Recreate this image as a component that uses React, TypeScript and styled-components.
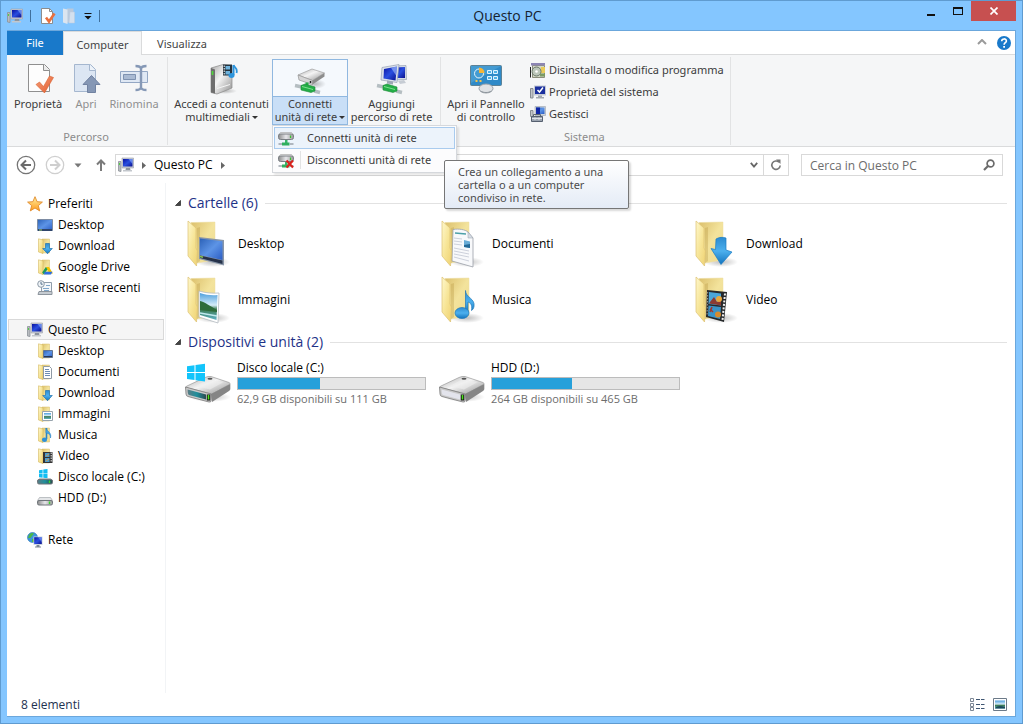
import React from "react";
import styled, { createGlobalStyle, css } from "styled-components";

const GlobalStyle = createGlobalStyle`
  *, *::before, *::after { box-sizing: border-box; }
  body {
    margin: 0;
    font-family: "Open Sans", "Noto Sans", "Liberation Sans", sans-serif;
    font-size: 12px;
    line-height: 16px;
    color: #000;
  }
  button, input { font: inherit; color: inherit; }
  button { border: 0; padding: 0; margin: 0; background: none; }
  ul { list-style: none; margin: 0; padding: 0; }
  a { color: inherit; text-decoration: none; }
  svg { display: block; flex: none; }
`;

/* ---------- shared paint ---------- */

const PaintSheet = styled.svg`
  position: absolute;
`;

const Paints = () => (
  <PaintSheet width="0" height="0" aria-hidden="true">
    <defs>
      <linearGradient id="flap" x1="0" y1="0" x2="1" y2="1">
        <stop offset="0" stopColor="#fef7cc" />
        <stop offset="0.5" stopColor="#f7e597" />
        <stop offset="1" stopColor="#efd272" />
      </linearGradient>
      <linearGradient id="back" x1="0" y1="0" x2="1" y2="1">
        <stop offset="0" stopColor="#dcc06c" />
        <stop offset="0.5" stopColor="#f3e39c" />
        <stop offset="1" stopColor="#eedb90" />
      </linearGradient>
      <linearGradient id="screen" x1="0" y1="0" x2="1" y2="1">
        <stop offset="0" stopColor="#2c62b8" />
        <stop offset="0.5" stopColor="#5d94e6" />
        <stop offset="1" stopColor="#2a5cc4" />
      </linearGradient>
      <linearGradient id="navy" x1="0" y1="0" x2="1" y2="1">
        <stop offset="0" stopColor="#0a12a0" />
        <stop offset="0.5" stopColor="#2a4fe0" />
        <stop offset="1" stopColor="#0a0f8c" />
      </linearGradient>
      <linearGradient id="blue" x1="0" y1="0" x2="0" y2="1">
        <stop offset="0" stopColor="#2d8bd0" />
        <stop offset="0.5" stopColor="#4cb0ee" />
        <stop offset="1" stopColor="#1273be" />
      </linearGradient>
      <linearGradient id="metal" x1="0" y1="0" x2="1" y2="1">
        <stop offset="0" stopColor="#a9a9a9" />
        <stop offset="0.45" stopColor="#f4f4f4" />
        <stop offset="1" stopColor="#8f8f8f" />
      </linearGradient>
      <linearGradient id="metalFront" x1="0" y1="0" x2="1" y2="0">
        <stop offset="0" stopColor="#8c8c8c" />
        <stop offset="0.5" stopColor="#e6e6ea" />
        <stop offset="1" stopColor="#9a9a9a" />
      </linearGradient>
      <linearGradient id="teal" x1="0" y1="0" x2="1" y2="0">
        <stop offset="0" stopColor="#5c7c84" />
        <stop offset="0.5" stopColor="#1f8f9c" />
        <stop offset="1" stopColor="#2b4a50" />
      </linearGradient>
      <linearGradient id="sky" x1="0" y1="0" x2="0" y2="1">
        <stop offset="0" stopColor="#4d9fdd" />
        <stop offset="0.45" stopColor="#d5ecf8" />
        <stop offset="0.6" stopColor="#3c7a52" />
        <stop offset="1" stopColor="#5fb3c8" />
      </linearGradient>
      <linearGradient id="star" x1="0" y1="0" x2="0" y2="1">
        <stop offset="0" stopColor="#fff0a0" />
        <stop offset="1" stopColor="#ff9a1c" />
      </linearGradient>
      <linearGradient id="tick" x1="0" y1="0" x2="1" y2="1">
        <stop offset="0" stopColor="#f6a27c" />
        <stop offset="1" stopColor="#e2592c" />
      </linearGradient>
      <radialGradient id="shade">
        <stop offset="0" stopColor="#000" stopOpacity="0.25" />
        <stop offset="1" stopColor="#000" stopOpacity="0" />
      </radialGradient>
    </defs>
  </PaintSheet>
);

type IconProps = { size: number; box?: number; children: React.ReactNode };
const Icon = ({ size, box = size, children }: IconProps) => (
  <svg width={size} height={size} viewBox={`0 0 ${box} ${box}`} aria-hidden="true">
    {children}
  </svg>
);

/* ---------- small icons, 16 px ---------- */

const PcIcon = () => (
  <Icon size={16}>
    <path d="M0.500 4.500h2.500v10l-2.500-0.500z" fill="#b9bcc0" stroke="#8c9298" strokeWidth="0.800" />
    <path d="M1.500 6v2" stroke="#53d044" />
    <path d="M4 1h11.500v10H4z" fill="#c9ced6" stroke="#9aa0aa" strokeWidth="0.600" />
    <path d="M5 2h9.500v7.500H5z" fill="url(#navy)" />
    <path d="M10.500 2h4v5z" fill="#8fb0f8" opacity="0.6" />
    <path d="M8 11h4l0.500 2h-5z" fill="#8e959e" />
    <path d="M5 13h9v1.500H5z" fill="#c3c7cc" />
  </Icon>
);

const StarIcon = () => (
  <Icon size={16}>
    <path
      d="M8 0.700l2.100 5 5.300 0.400-4.100 3.500 1.400 5.300L8 12l-4.700 2.900 1.400-5.300L0.600 6.100l5.300-0.400z"
      fill="url(#star)"
      stroke="#e08a2a"
      strokeWidth="0.900"
      strokeLinejoin="round"
    />
  </Icon>
);

const MonitorIcon = () => (
  <Icon size={16}>
    <path d="M0.500 2.500h15v11h-15z" fill="url(#screen)" stroke="#7d8ca3" />
    <path d="M1 12h14v2H1z" fill="#2f456b" />
    <path d="M2 13h3" stroke="#9fd07a" />
  </Icon>
);

const SmallFolderBase = () => (
  <>
    <path d="M5 1h7.500v14H5z" fill="url(#back)" stroke="#d9be6c" strokeWidth="0.500" />
    <path d="M1.500 0.800L6 2v13.500L1.500 14z" fill="url(#flap)" stroke="#d5b860" strokeWidth="0.600" />
  </>
);

type Kind = "desktop" | "documenti" | "download" | "immagini" | "musica" | "video" | "drive";

const smallOverlay: Record<Kind, React.ReactNode> = {
  desktop: (
    <>
      <path d="M6.500 7.500h9v7h-9z" fill="url(#screen)" stroke="#62748f" />
      <path d="M7 13.500h8" stroke="#263754" />
    </>
  ),
  documenti: (
    <>
      <path d="M6.500 2.500h6l2 2v10h-8z" fill="#fff" stroke="#8f9aa5" />
      <path d="M8 5.500h4M8 7.500h5M8 9.500h5M8 11.500h5" stroke="#6d8db5" />
    </>
  ),
  download: (
    <path d="M8.500 5.500h4v5h2.800L10.500 15.700 5.700 10.500h2.800z" fill="url(#blue)" stroke="#2372ad" strokeWidth="0.700" />
  ),
  immagini: (
    <>
      <path d="M5.500 5.500h10v9h-10z" fill="#fff" stroke="#98a4ad" />
      <path d="M7 7h7v6H7z" fill="url(#sky)" />
    </>
  ),
  musica: (
    <>
      <path d="M9.500 1v11" stroke="#2b83c4" strokeWidth="1.600" />
      <path d="M9 1c1 4 6 4 4.500 10 0-4-2-4.500-4.500-5z" fill="#46a5e4" stroke="#2b83c4" strokeWidth="0.600" />
      <ellipse cx="7.500" cy="12.800" rx="2.600" ry="2.200" fill="#2f90d6" />
    </>
  ),
  video: (
    <>
      <path d="M6 4h9.500v11H6z" fill="#343434" />
      <path d="M8 5h4.500v4H8zM8 10h4.500v4H8z" fill="#4d9bcb" />
      <path d="M9 8l3-2M9 13l3-2" stroke="#d09a4a" />
      <path d="M14.200 4.500v10" stroke="#eee" strokeDasharray="1.500 1" />
    </>
  ),
  drive: (
    <>
      <path d="M8.800 8h3.200l4 6.500h-3.400z" fill="#f5c400" />
      <path d="M8.800 8l-3.600 5.500 1.700 2 3.600-5.300z" fill="#1d9b55" />
      <path d="M7.800 12.800H15.500L14 15.500H6.900z" fill="#2f6fe0" />
    </>
  ),
};

const SmallFolder = ({ kind }: { kind: Kind }) => (
  <Icon size={16}>
    <SmallFolderBase />
    {smallOverlay[kind]}
  </Icon>
);

const RecentIcon = () => (
  <Icon size={16}>
    <path d="M4.500 2.500h10v9h-10z" fill="#f4f7fa" stroke="#8f9dab" />
    <path d="M9 5.500h4M6 8.500h6M7 10.500h5" stroke="#7fa6c9" />
    <path d="M2 11.500h13v3H1z" fill="#c6ccd2" stroke="#8d959d" />
    <circle cx="4" cy="4" r="3.300" fill="#eef3f7" stroke="#8d9aa6" />
    <path d="M4 2v2.200h1.700" stroke="#57708a" fill="none" />
  </Icon>
);

const WinLogo = () => (
  <path d="M2 1.200l3.600-0.500v3.700H2zM6.300 0.600L10.500 0v4.400H6.300zM2 5.100h3.600v3.600L2 8.300zM6.300 5.100h4.200v4.200l-4.200-0.500z" fill="#13bdf2" />
);

const SmallDrive = ({ system }: { system?: boolean }) => (
  <Icon size={16}>
    {system && <WinLogo />}
    <path
      d={system ? "M2.500 9.500h11l2 2.500H0.500z" : "M2.500 7.500h11l2 3H0.500z"}
      fill="#e4e6e8"
      stroke="#9a9fa4"
      strokeWidth="0.600"
    />
    <rect x="0.500" y="10.500" width="15" height="4.500" rx="1.500" fill={system ? "url(#teal)" : "url(#metalFront)"} stroke="#70767b" />
    <path d="M12.500 11.500v2.500" stroke="#37d62e" strokeWidth="1.400" />
  </Icon>
);

const NetworkIcon = () => (
  <Icon size={16}>
    <circle cx="5.500" cy="5.500" r="5" fill="#3c96dc" stroke="#2771b5" strokeWidth="0.600" />
    <path d="M2 3c2-2.500 4-2 5-1.500L5 4 3.500 6 1 6zM5 7l3 0-1 3-2 0z" fill="#4db848" />
    <path d="M6.500 4.500h9v8.500h-9z" fill="#ccd4de" />
    <path d="M7.200 5.200h7.600v6.800H7.200z" fill="url(#navy)" />
    <path d="M11 5.200h3.800v5z" fill="#8fb0f8" opacity="0.500" />
    <path d="M9.500 13h3v1.500h1.500v1H8v-1h1.500z" fill="#7c8794" />
  </Icon>
);

const NetDriveIcon = ({ removed }: { removed?: boolean }) => (
  <Icon size={16}>
    <path d="M2.500 1.500h11l2 2.500H0.500z" fill="#efefef" stroke="#a0a0a0" strokeWidth="0.600" />
    <rect x="0.500" y="3" width="15" height="5.500" rx="2" fill="url(#metalFront)" stroke="#7a7f84" />
    <path d="M12.500 4.500v2.500" stroke="#37c62e" strokeWidth="1.200" />
    <path d="M7 9h2.500v3H7z" fill="#39b56a" />
    <path d="M4 11.500h7.500v3H4z" fill="#2faf5e" />
    <path d="M0.500 13h3.500M12 13h3.500" stroke="#9aa3aa" strokeWidth="1.600" />
    {removed && <path d="M8.500 7.500l6.500 7M15 7.500l-6.500 7" stroke="#d8231c" strokeWidth="2.200" />}
  </Icon>
);

const UninstallIcon = () => (
  <Icon size={16}>
    <path d="M2.500 3.500h12v12h-12z" fill="#d4d8c6" stroke="#8b8d7c" />
    <path d="M1 1h14v2.500H1z" fill="#8d86b4" />
    <path d="M11 5h4v6h-4z" fill="#e9cb5a" />
    <circle cx="6.500" cy="9.500" r="4.500" fill="#bcc6ba" stroke="#6a786a" />
    <circle cx="6.500" cy="9.500" r="1.300" fill="#fff" />
    <path d="M0.500 5v10.500" stroke="#222" />
    <path d="M10 13h5" stroke="#7b9a62" strokeWidth="3" />
  </Icon>
);

const SystemIcon = () => (
  <Icon size={16}>
    <path d="M0.500 4.500h2.500v9.500h-2.500z" fill="#c3c6ca" stroke="#868c93" />
    <path d="M4 1.500h12v10H4z" fill="#c5cbd4" />
    <path d="M5 2.500h10v7.500H5z" fill="#1a2f9e" />
    <path d="M7.500 6l2 2 3.500-4.500" stroke="#fff" strokeWidth="1.500" fill="none" />
    <path d="M8 11.500h4v1.500h2v1.500H6V13h2z" fill="#a3a9b0" />
  </Icon>
);

const ManageIcon = () => (
  <Icon size={16}>
    <path d="M5 0.500h10.500v9H5z" fill="#cfd5dd" stroke="#9aa2ad" strokeWidth="0.600" />
    <path d="M6 1.500h8.500v6.500H6z" fill="url(#screen)" />
    <path d="M6 1.500h4v6.500H6z" fill="#1027a6" />
    <path d="M0.500 4.500h2.500v6h-2.500z" fill="#c3c6ca" stroke="#868c93" />
    <path d="M3.500 10V8.500h7V10" stroke="#5d6570" fill="none" />
    <path d="M1.500 10.500h11v5h-11z" fill="#9ba4b0" stroke="#566070" />
    <path d="M2 12.500h10M5 11.500v2.500M9 11.500v2.500" stroke="#dfe3e8" />
  </Icon>
);

const PageTickIcon = () => (
  <Icon size={16}>
    <path d="M1.500 0.500h8l3 3v12h-11z" fill="#fff" stroke="#8c8c8c" />
    <path d="M9.500 0.500v3h3" fill="none" stroke="#8c8c8c" />
    <path d="M6 9.500l3 4 5.500-8" stroke="#e8703f" strokeWidth="2.600" fill="none" />
  </Icon>
);

const NewFolderIcon = () => (
  <Icon size={16}>
    <path d="M5 0.500h6.500v14H5z" fill="#b9c9dc" />
    <path d="M1 0.500l4.500 1V16L1 14.500z" fill="#dbe5f0" />
    <path d="M8 4h4.500v11H7z" fill="#d3e0ee" stroke="#bccbdd" strokeWidth="0.500" />
  </Icon>
);

const DetailsViewIcon = () => (
  <Icon size={16}>
    <path d="M1.500 1.500h3v3h-3zM1.500 6.500h3v3h-3zM1.500 10.500h3v3h-3z" fill="#fff" stroke="#7d8795" />
    <path d="M7 2.500h4M12 2.500h3.500M7 7.500h4M12 7.500h3.500M7 11.500h4M12 11.500h3.500" stroke="#3f5672" />
  </Icon>
);

const TilesViewIcon = () => (
  <Icon size={16}>
    <path d="M1.500 1.500h13v12h-13z" fill="#fff" stroke="#6c7a88" />
    <path d="M3 3.500h10v8H3z" fill="url(#sky)" />
    <path d="M3 11.500c2-3 5-3 10-1.500v1.500z" fill="#1c4a5a" />
  </Icon>
);

/* ---------- ribbon icons, 32 px ---------- */

const PropertiesLarge = () => (
  <Icon size={32}>
    <path d="M6.500 1.500h16l5 5v22h-21z" fill="#fdfdfd" stroke="#8f8f8f" />
    <path d="M21.500 1.500v6h6" fill="#e9e9e9" stroke="#8f8f8f" />
    <path d="M14 21.500l3.500-2.500 4 4.500 6-10.500 4 1.500-9 15.500z" fill="url(#tick)" stroke="#d9622f" strokeWidth="0.600" />
  </Icon>
);

const OpenLarge = () => (
  <Icon size={32}>
    <path d="M4.500 1.500h16l5 5v22h-21z" fill="#dce6f3" stroke="#a5b7cf" />
    <path d="M19.500 1.500v6h6" fill="#eef3f9" stroke="#a5b7cf" />
    <path d="M21.500 12.500l8.500 9h-4.500v8h-8v-8H13z" fill="#8597b5" stroke="#7182a1" />
  </Icon>
);

const RenameLarge = () => (
  <Icon size={32}>
    <path d="M2.500 8.500h27v11h-27z" fill="#dfe8f4" stroke="#93a7c4" />
    <path d="M5.500 11.500h12v5h-12z" fill="#a9bad3" stroke="#7e92b1" />
    <path d="M17.500 3c3 0 5 0.500 5.500 2.500 0.500-2 2.500-2.500 5.500-2.500M23 5v20M17.500 27c3 0 5-0.500 5.500-2.500 0.500 2 2.500 2.500 5.500 2.500" stroke="#8598b6" strokeWidth="2.400" fill="none" />
  </Icon>
);

const MediaLarge = () => (
  <Icon size={32}>
    <ellipse cx="19" cy="28" rx="12" ry="3" fill="url(#shade)" />
    <path d="M5 5l12-3.500 9 1.500v22L11 31l-6-1.500z" fill="url(#metal)" stroke="#8a8a8a" strokeWidth="0.700" />
    <path d="M5 5l4 1.500V30.500L5 29.500z" fill="#6e6e6e" />
    <path d="M6.500 8v4" stroke="#4ed83a" strokeWidth="1.600" />
    <path d="M11 25.500l13-4" stroke="#f5f5f5" />
    <path d="M17 1.500h9v11h-9z" fill="#26333d" />
    <path d="M19.500 3h4.500v3.500h-4.500zM19.500 8h4.500v3.500h-4.500z" fill="#6fb3dc" />
    <path d="M18.200 2.500v9" stroke="#fff" strokeDasharray="1.500 1" />
    <path d="M27.500 2v10" stroke="#2c94dc" strokeWidth="2" />
    <path d="M27.500 2c1 3 4.500 3 3 8" fill="none" stroke="#2c94dc" strokeWidth="1.800" />
    <ellipse cx="25.500" cy="12.500" rx="3" ry="2.400" fill="#2c94dc" />
  </Icon>
);

const GreenCable = () => (
  <>
    <path d="M1 22.500l7 1.500M20 28l6 1.500" stroke="#b5bec2" strokeWidth="3.400" />
    <path d="M7 22.500l4-1.500 10 3v4l-4 1.500L7 27z" fill="#23ae47" stroke="#1c8a38" strokeWidth="0.600" />
    <path d="M8 23.500l11 3" stroke="#7fe08f" />
  </>
);

const MapDriveLarge = () => (
  <Icon size={32}>
    <ellipse cx="21" cy="21" rx="11" ry="5" fill="url(#shade)" />
    <path d="M4 12L18 6l12.500 4-12 7.500z" fill="url(#metal)" stroke="#a0a0a0" strokeWidth="0.700" />
    <path d="M4 12l14.500 5.500v4L5 17z" fill="#d5d5d5" stroke="#959595" strokeWidth="0.700" />
    <path d="M18.500 17.500L30.500 10v3.500l-12 8z" fill="#8d8d8d" />
    <path d="M16.500 18v2" stroke="#222" strokeWidth="1.500" />
    <path d="M13 19.500v4" stroke="#23ae47" strokeWidth="3" />
    <GreenCable />
  </Icon>
);

const AddPlaceLarge = () => (
  <Icon size={32}>
    <path d="M17 3l13-0.500 0.500 14L18 17z" fill="#d4dbe6" stroke="#96a1b3" strokeWidth="0.700" />
    <path d="M19 4.500l10-0.500v11L19 15z" fill="url(#navy)" />
    <path d="M6 4.500l17-3-2 18-16-2.500z" fill="#dbe1ea" stroke="#96a1b3" strokeWidth="0.700" />
    <path d="M8 6l13-2.500-1.500 14-12-2z" fill="url(#navy)" />
    <path d="M15 4.700l6-1.200-1 9z" fill="#a9c1fb" opacity="0.600" />
    <path d="M11 17.500l6 1v3l-6-1z" fill="#9ea8b5" />
    <path d="M22 18l6-1 2 3-6 1z" fill="#c6ccd4" />
    <GreenCable />
  </Icon>
);

const ControlPanelLarge = () => (
  <Icon size={32}>
    <rect x="0.500" y="2.500" width="31" height="20" rx="1" fill="#2f8ac8" stroke="#5d8296" />
    <path d="M1 3h30L1 20z" fill="#65b4e2" opacity="0.400" />
    <circle cx="9" cy="10.500" r="4.500" fill="none" stroke="#e9f5fc" />
    <path d="M9 10V4.500a5.500 5.500 0 0 1 5.500 5.500z" fill="#f7b536" />
    <path d="M17.500 7.500h4v3h-4zM23.500 7.500h4v3h-4zM17.500 13.500h4v3h-4zM23.500 13.500h4v3h-4z" fill="#4fb2e6" stroke="#dff3ff" />
    <path d="M5.500 18h2M9.500 18h2" stroke="#f7c44a" strokeWidth="2" />
    <ellipse cx="16" cy="25.500" rx="7" ry="4.500" fill="#dfe2e5" stroke="#9aa1a8" />
    <path d="M10.500 28c3 2 8 2 11 0" stroke="#8d959c" fill="none" />
  </Icon>
);

/* ---------- content icons, 48 px ---------- */

const folderContents: Partial<Record<Kind, React.ReactNode>> = {
  desktop: (
    <>
      <path d="M16 17l25 3v25.500L16 39z" fill="#8996a8" />
      <path d="M17 18.500l22.500 2.700V40L17 35z" fill="url(#screen)" />
      <path d="M17 35.500l22.500 5v3.500L17 38z" fill="#26324a" />
      <path d="M17 36.500l3 0.700" stroke="#88c24f" strokeWidth="1.500" />
    </>
  ),
  documenti: (
    <>
      <path d="M16 9.500c6-1 12 0 15 2.500l5 6v29L15 41z" fill="#f8f9fb" stroke="#9aa0a8" strokeWidth="0.800" />
      <path d="M31 12v6h5z" fill="#d6dde6" stroke="#9aa0a8" strokeWidth="0.500" />
      <path d="M18 13l11 1" stroke="#4da0a8" strokeWidth="1.300" />
      <path d="M17 18l8 1M17 21l8 1M17 24l8 1M17 28l15 3M17 31l15 3M17 34l15 3M17 37l15 4" stroke="#cdd1db" />
      <path d="M27 20l6 1.500v6.500L27 27z" fill="#69acd6" />
      <path d="M27 25l6-1v4L27 27z" fill="#256a97" />
    </>
  ),
  download: (
    <path d="M25 19c3-2 7-2 10-1v12l6 2-11 12.500L20 28.500l4.500 1z" fill="url(#blue)" stroke="#1b7cc4" strokeWidth="0.700" />
  ),
  immagini: (
    <>
      <path d="M16 15c7 2 13 2.500 20 2l-1 30-19-6z" fill="#fff" stroke="#b3bac0" strokeWidth="0.800" />
      <path d="M17 17c6 2 12 2.500 17.500 2l-1 25L17 39z" fill="url(#sky)" />
      <path d="M17 25c5 1 10 5 17 9v2l-17-2z" fill="#2d6b3a" />
      <path d="M17 37l17 3" stroke="#bfe9ee" strokeWidth="1.500" />
    </>
  ),
  musica: (
    <>
      <path d="M28.500 14.500c0 7 10 8 8.500 16-0.500 2-1 3-2.500 4 1-6-1.500-8-3.500-8.500V37h-2.500z" fill="url(#blue)" stroke="#1f78b8" strokeWidth="0.700" />
      <ellipse cx="25" cy="37" rx="7" ry="5.500" fill="url(#blue)" stroke="#1f78b8" strokeWidth="0.700" />
    </>
  ),
  video: (
    <>
      <path d="M16 14l20 2-3 30-18-5z" fill="#26292b" />
      <path d="M18 16l12 1.500v12L17.500 28z" fill="#4aa7d9" />
      <path d="M17.500 29.500L30 31l-1 12-12-3z" fill="#3a93c8" />
      <path d="M19 26l4-5 3 5 4-3v6.500L18 27.500z" fill="#8c3b32" />
      <circle cx="28" cy="23" r="3" fill="#e9a93c" />
      <circle cx="27" cy="38.500" r="3" fill="#d88b2c" />
      <path d="M19 33l3 3M21 31l-2 5" stroke="#a3382a" strokeWidth="1.500" />
      <path d="M34 17.500l-2.500 27" stroke="#f1f1f1" strokeWidth="2" strokeDasharray="2 1.500" />
      <path d="M16.700 16l-0.700 24" stroke="#9a9a9a" strokeDasharray="1.500 1.500" />
    </>
  ),
};

const BigFolder = ({ kind }: { kind: Kind }) => (
  <Icon size={48}>
    <ellipse cx="30" cy="42" rx="17" ry="5" fill="url(#shade)" />
    <path d="M8 2.500l24-0.500V40L14 43z" fill="url(#back)" stroke="#ecdca0" strokeWidth="0.500" />
    <path d="M14 8l3-1v34l-3 2z" fill="#b99a45" opacity="0.350" />
    {folderContents[kind]}
    <path d="M5 1l8 7v20l1.500 3L13.500 46 5 36z" fill="url(#flap)" stroke="#dcc273" strokeWidth="0.700" />
  </Icon>
);

const BigDrive = ({ system }: { system?: boolean }) => (
  <Icon size={48}>
    <ellipse cx="27" cy="38" rx="21" ry="5" fill="url(#shade)" />
    <path d="M3 28.500Q2 28 4 27L22 18.500Q25 17 28 17.500L46 23.500Q48 24.500 46.500 25.500L29 35z" fill="url(#metal)" stroke="#9a9a9a" strokeWidth="0.700" />
    <path d="M13 27l13-7 14 3.500-13 7z" fill="#efefef" opacity="0.600" />
    <ellipse cx="27" cy="19.700" rx="2.500" ry="1" fill="#555" />
    <path d="M28 35L47.300 25V30Q47.300 31 46 32L29 43z" fill="#858585" />
    <path d="M2.500 28L28 35V41.500Q28 43.500 26 43L5 37.500Q3 37 3 35z" fill="#c9c9c9" stroke="#7b7b7b" strokeWidth="0.800" />
    <path d="M4.500 30.500L23 35.500V40.500L6 36Q5 35.500 4.800 34z" fill={system ? "url(#teal)" : "#e3e4ec"} />
    <path d="M25.500 35.500v6" stroke="#111" strokeWidth="3.400" />
    <path d="M25.500 36v4.500" stroke="#4be01c" strokeWidth="1.600" />
    {system && (
      <path d="M4 7.200l7.500-1V13H4zM12.500 6L22 4.800V13h-9.500zM4 14h7.500v7L4 20zM12.500 14H22v8.500l-9.500-1.300z" fill="#12c4fb" />
    )}
  </Icon>
);

/* ---------- window frame ---------- */

const Frame = styled.div`
  min-height: 100vh;
  display: flex;
  flex-direction: column;
  padding: 0 6px 6px;
  background: #84c6ff;
  border: 1px solid #5f9bd0;
`;

const TitleBar = styled.header`
  display: grid;
  grid-template-columns: 1fr auto 1fr;
  height: 29px;
`;

const QuickAccess = styled.div`
  display: flex;
  align-items: center;
  gap: 6px;
`;

const QuickButton = styled.button`
  display: block;
`;

const QuickDivider = styled.span`
  width: 1px;
  height: 12px;
  margin: 0 3px 0 1px;
  background: #3f6f9c;
`;

const WindowTitle = styled.h1`
  margin: 0;
  padding-right: 8px;
  font-size: 14px;
  font-weight: 400;
  line-height: 30px;
  color: #16222e;
`;

const WindowButtons = styled.div`
  display: flex;
  justify-content: flex-end;
  align-items: flex-start;
`;

const WindowButton = styled.button<{ $close?: boolean }>`
  display: grid;
  place-items: center;
  width: ${(p) => (p.$close ? 45 : 27)}px;
  height: 20px;
  background: ${(p) => (p.$close ? "#c75050" : "transparent")};
`;

const Client = styled.div`
  flex: 1;
  display: flex;
  flex-direction: column;
  background: #fff;
  border: 1px solid #6ba7dc;
  border-left-width: 0;
`;

/* ---------- ribbon ---------- */

const TabStrip = styled.div`
  display: flex;
  height: 24px;
  border-bottom: 1px solid #dadbdc;
`;

const Tab = styled.button<{ $kind?: "file" | "active"; $width: number }>`
  width: ${(p) => p.$width}px;
  height: 24px;
  padding-top: 2px;
  font-family: "Noto Sans", sans-serif;
  font-size: 11px;
  color: #444;
  ${(p) =>
    p.$kind === "file" &&
    css`
      padding-top: 0;
      color: #fff;
      background: #1979ca;
    `}
  ${(p) =>
    p.$kind === "active" &&
    css`
      background: #f5f6f7;
      border: 1px solid #dadbdc;
      border-bottom: 0;
    `}
`;

const TabTools = styled.div`
  display: flex;
  align-items: center;
  gap: 10px;
  margin-left: auto;
  padding-right: 4px;
`;

const Ribbon = styled.div`
  display: flex;
  height: 92px;
  padding: 2px 0 1px;
  background: #f5f6f7;
  border-bottom: 1px solid #dadbdc;
  font-family: "Noto Sans", "Open Sans", sans-serif;
`;

const Group = styled.section`
  display: flex;
  flex-direction: column;
  justify-content: space-between;
  padding: 2px 6px 0 4px;
  border-right: 1px solid #e2e3e4;
`;

const GroupItems = styled.div`
  display: flex;
  gap: 1px;
`;

const GroupLabel = styled.h2`
  margin: 0;
  font-size: 11px;
  font-weight: 400;
  line-height: 16px;
  text-align: center;
  color: #8c8c8c;
`;

const LargeButton = styled.button<{ $width: number; $off?: boolean }>`
  display: flex;
  flex-direction: column;
  align-items: center;
  gap: 2px;
  width: ${(p) => p.$width}px;
  height: 66px;
  padding-top: 4px;
  font-size: 11px;
  line-height: 13px;
  white-space: nowrap;
  color: ${(p) => (p.$off ? "#8f8f8f" : "#3c3c3c")};
`;

const SplitWrap = styled.div`
  position: relative;
`;

const SplitButton = styled(LargeButton)`
  border: 1px solid #90b8e0;
  padding-top: 3px;
  background: linear-gradient(#f5f9fd 36px, #90b8e0 36px, #90b8e0 37px, #c9dff7 37px);
`;

const Caret = styled.span`
  display: inline-block;
  margin-left: 2px;
  vertical-align: 2px;
  border: 3px solid transparent;
  border-top-color: #333;
  border-bottom: 0;
`;

const SmallList = styled.div`
  display: flex;
  flex-direction: column;
`;

const SmallButton = styled.button`
  display: flex;
  align-items: center;
  gap: 3px;
  height: 22px;
  padding-left: 2px;
  font-size: 11px;
  white-space: nowrap;
  color: #3c3c3c;
`;

const Menu = styled.div`
  position: absolute;
  z-index: 2;
  top: 66px;
  left: 0;
  width: 185px;
  padding: 1px;
  background: #fcfcfd;
  border: 1px solid #d5d8dc;
  box-shadow: 2px 2px 2px rgba(0, 0, 0, 0.1);
`;

const MenuItem = styled.button<{ $hot?: boolean }>`
  display: grid;
  grid-template-columns: 23px auto;
  justify-content: start;
  align-items: center;
  gap: 6px;
  width: 100%;
  height: 22px;
  padding-left: 3px;
  font-size: 11px;
  text-align: left;
  white-space: nowrap;
  color: #3c3c3c;
  border: 1px solid ${(p) => (p.$hot ? "#a9cbee" : "transparent")};
  background: ${(p) => (p.$hot ? "#ecf3fb" : "transparent")};
`;

const MenuGlyph = styled.span<{ $ruled?: boolean }>`
  display: block;
  padding-top: 2px;
  border-right: 1px solid ${(p) => (p.$ruled ? "#e2e3e4" : "transparent")};
`;

const Tooltip = styled.div`
  position: absolute;
  z-index: 3;
  top: 101px;
  left: 172px;
  width: 185px;
  padding: 4px 13px;
  font-size: 11px;
  line-height: 13px;
  white-space: nowrap;
  color: #4c4c4c;
  background: linear-gradient(#fff, #e4ebf6);
  border: 1px solid #767676;
  border-radius: 2px;
  box-shadow: 2px 2px 2px rgba(0, 0, 0, 0.15);
`;

/* ---------- address row ---------- */

const AddressRow = styled.div`
  display: flex;
  align-items: center;
  height: 36px;
  padding: 0 12px 0 9px;
`;

const NavButtons = styled.div`
  display: flex;
  align-items: center;
  gap: 9px;
  margin-right: 6px;
`;

const NavButton = styled.button`
  display: block;
`;

const AddressBox = styled.div`
  flex: 1;
  display: flex;
  align-items: center;
  height: 22px;
  padding-left: 2px;
  border: 1px solid #d9d9d9;
`;

const Crumbs = styled.nav`
  flex: 1;
  display: flex;
  align-items: center;
  gap: 8px;
`;

const BoxButton = styled.button<{ $ruled?: boolean }>`
  display: grid;
  place-items: center;
  width: ${(p) => (p.$ruled ? 25 : 18)}px;
  height: 20px;
  border-left: ${(p) => (p.$ruled ? "1px solid #d9d9d9" : "0")};
`;

const SearchBox = styled.label`
  display: flex;
  align-items: center;
  width: 202px;
  height: 22px;
  margin-left: 12px;
  padding: 0 7px 0 8px;
  border: 1px solid #d9d9d9;
`;

const SearchInput = styled.input`
  flex: 1;
  min-width: 0;
  height: 20px;
  padding: 0;
  border: 0;
  outline: 0;
  background: transparent;
  &::placeholder {
    color: #6d6d6d;
    opacity: 1;
  }
`;

/* ---------- body ---------- */

const Body = styled.div`
  flex: 1;
  display: flex;
`;

const Sidebar = styled.nav`
  width: 159px;
  padding: 10px 1px 0 1px;
  border-right: 1px solid #f2f4f6;
`;

const TreeSection = styled.ul`
  margin-bottom: 21px;
`;

const TreeLink = styled.a<{ $level: 1 | 2; $selected?: boolean }>`
  display: flex;
  align-items: center;
  gap: 5px;
  height: 21px;
  padding-left: ${(p) => (p.$level === 1 ? 18 : 28)}px;
  white-space: nowrap;
  border: 1px solid ${(p) => (p.$selected ? "#d9d9d9" : "transparent")};
  background: ${(p) => (p.$selected ? "#f5f5f5" : "transparent")};
`;

const Content = styled.main`
  flex: 1;
  min-width: 0;
  padding: 10px 8px 0 9px;
`;

const SectionHead = styled.h2`
  display: flex;
  align-items: center;
  gap: 7px;
  margin: 0;
  font-size: 14px;
  font-weight: 400;
  line-height: 20px;
  color: #1e3287;
  white-space: nowrap;
  &::after {
    content: "";
    flex: 1;
    height: 1px;
    background: #e2e2e2;
  }
`;

const Grid = styled.div`
  display: grid;
  grid-template-columns: repeat(auto-fill, 254px);
  row-gap: 8px;
  padding: 7px 0 8px 8px;
`;

const Tile = styled.a`
  display: flex;
  align-items: center;
  gap: 7px;
  height: 48px;
`;

const DriveTile = styled(Tile)`
  gap: 6px;
`;

const DriveInfo = styled.span`
  display: flex;
  flex-direction: column;
  width: 189px;
`;

const DriveNote = styled.span`
  font-size: 11px;
  color: #6d6d6d;
`;

const Track = styled.span`
  display: block;
  height: 13px;
  margin: 1px 0;
  background: #e6e6e6;
  border: 1px solid #bcbcbc;
`;

const Fill = styled.span`
  display: block;
  height: 11px;
  background: #26a0da;
`;

const StatusBar = styled.footer`
  display: flex;
  align-items: center;
  justify-content: space-between;
  height: 23px;
  padding: 0 7px 0 14px;
  color: #1e3250;
`;

const ViewButtons = styled.div`
  display: flex;
  gap: 7px;
`;

/* ---------- data ---------- */

const folders: { label: string; kind: Kind }[] = [
  { label: "Desktop", kind: "desktop" },
  { label: "Documenti", kind: "documenti" },
  { label: "Download", kind: "download" },
  { label: "Immagini", kind: "immagini" },
  { label: "Musica", kind: "musica" },
  { label: "Video", kind: "video" },
];

const drives = [
  { label: "Disco locale (C:)", note: "62,9 GB disponibili su 111 GB", used: 44, system: true },
  { label: "HDD (D:)", note: "264 GB disponibili su 465 GB", used: 43, system: false },
];

type Node = { label: string; icon: React.ReactNode; selected?: boolean };

const tree: Node[][] = [
  [
    { label: "Preferiti", icon: <StarIcon /> },
    { label: "Desktop", icon: <MonitorIcon /> },
    { label: "Download", icon: <SmallFolder kind="download" /> },
    { label: "Google Drive", icon: <SmallFolder kind="drive" /> },
    { label: "Risorse recenti", icon: <RecentIcon /> },
  ],
  [
    { label: "Questo PC", icon: <PcIcon />, selected: true },
    ...folders.map((f) => ({ label: f.label, icon: <SmallFolder kind={f.kind} /> })),
    { label: "Disco locale (C:)", icon: <SmallDrive system /> },
    { label: "HDD (D:)", icon: <SmallDrive /> },
  ],
  [{ label: "Rete", icon: <NetworkIcon /> }],
];

const Chevron = () => (
  <svg width="4" height="7" viewBox="0 0 4 7" aria-hidden="true">
    <path d="M0 0l4 3.500-4 3.500z" fill="#666" />
  </svg>
);

const SectionMark = () => (
  <svg width="6" height="6" viewBox="0 0 6 6" aria-hidden="true">
    <path d="M5.500 0.500v5h-5z" fill="#444" stroke="#333" strokeWidth="0.800" />
  </svg>
);

export default function App() {
  return (
    <Frame>
      <GlobalStyle />
      <Paints />
      <TitleBar>
        <QuickAccess>
          <PcIcon />
          <QuickDivider />
          <QuickButton aria-label="Proprietà">
            <PageTickIcon />
          </QuickButton>
          <QuickButton aria-label="Nuova cartella">
            <NewFolderIcon />
          </QuickButton>
          <QuickButton aria-label="Personalizza barra di accesso rapido">
            <svg width="8" height="8" viewBox="0 0 8 8" aria-hidden="true">
              <path d="M0.500 1.500h7" stroke="#111" />
              <path d="M0.500 4h7L4 7.500z" fill="#111" />
            </svg>
          </QuickButton>
          <QuickDivider />
        </QuickAccess>
        <WindowTitle>Questo PC</WindowTitle>
        <WindowButtons>
          <WindowButton aria-label="Riduci a icona">
            <svg width="10" height="10" viewBox="0 0 10 10">
              <path d="M1 9h8" stroke="#111" strokeWidth="2" />
            </svg>
          </WindowButton>
          <WindowButton aria-label="Ingrandisci">
            <svg width="10" height="10" viewBox="0 0 10 10">
              <path d="M0 1h10v8H0zM1 3v5h8V3z" fill="#111" fillRule="evenodd" />
            </svg>
          </WindowButton>
          <WindowButton $close aria-label="Chiudi">
            <svg width="8" height="8" viewBox="0 0 8 8">
              <path d="M0.500 0.500l7 7M7.500 0.500l-7 7" stroke="#fff" strokeWidth="1.700" />
            </svg>
          </WindowButton>
        </WindowButtons>
      </TitleBar>

      <Client>
        <TabStrip>
          <Tab $kind="file" $width={56}>File</Tab>
          <Tab $kind="active" $width={79}>Computer</Tab>
          <Tab $width={80}>Visualizza</Tab>
          <TabTools>
            <QuickButton aria-label="Riduci barra multifunzione">
              <svg width="10" height="7" viewBox="0 0 10 7">
                <path d="M1 5l4-4 4 4" stroke="#9a9a9a" strokeWidth="2" fill="none" />
              </svg>
            </QuickButton>
            <QuickButton aria-label="Guida">
              <svg width="14" height="14" viewBox="0 0 14 14">
                <circle cx="7" cy="7" r="7" fill="#1979ca" />
                <path d="M4.700 5.200c0-3 4.700-3 4.700-0.200 0 1.700-2.300 1.800-2.300 3.700" stroke="#fff" strokeWidth="1.600" fill="none" />
                <path d="M6.200 10h1.800v1.700H6.200z" fill="#fff" />
              </svg>
            </QuickButton>
          </TabTools>
        </TabStrip>

        <Ribbon>
          <Group>
            <GroupItems>
              <LargeButton $width={54}>
                <PropertiesLarge />
                <span>Proprietà</span>
              </LargeButton>
              <LargeButton $width={40} $off disabled>
                <OpenLarge />
                <span>Apri</span>
              </LargeButton>
              <LargeButton $width={54} $off disabled>
                <RenameLarge />
                <span>Rinomina</span>
              </LargeButton>
            </GroupItems>
            <GroupLabel>Percorso</GroupLabel>
          </Group>

          <Group>
            <GroupItems>
              <LargeButton $width={99}>
                <MediaLarge />
                <span>
                  Accedi a contenuti
                  <br />
                  multimediali
                  <Caret />
                </span>
              </LargeButton>
              <SplitWrap>
                <SplitButton $width={76} aria-haspopup="menu" aria-expanded="true">
                  <MapDriveLarge />
                  <span>
                    Connetti
                    <br />
                    unità di rete
                    <Caret />
                  </span>
                </SplitButton>
                <Menu role="menu">
                  <MenuItem $hot role="menuitem">
                    <MenuGlyph>
                      <NetDriveIcon />
                    </MenuGlyph>
                    Connetti unità di rete
                  </MenuItem>
                  <MenuItem role="menuitem">
                    <MenuGlyph $ruled>
                      <NetDriveIcon removed />
                    </MenuGlyph>
                    Disconnetti unità di rete
                  </MenuItem>
                </Menu>
                <Tooltip role="tooltip">
                  Crea un collegamento a una
                  <br />
                  cartella o a un computer
                  <br />
                  condiviso in rete.
                </Tooltip>
              </SplitWrap>
              <LargeButton $width={85}>
                <AddPlaceLarge />
                <span>
                  Aggiungi
                  <br />
                  percorso di rete
                </span>
              </LargeButton>
            </GroupItems>
          </Group>

          <Group>
            <GroupItems>
              <LargeButton $width={82}>
                <ControlPanelLarge />
                <span>
                  Apri il Pannello
                  <br />
                  di controllo
                </span>
              </LargeButton>
              <SmallList>
                <SmallButton>
                  <UninstallIcon />
                  Disinstalla o modifica programma
                </SmallButton>
                <SmallButton>
                  <SystemIcon />
                  Proprietà del sistema
                </SmallButton>
                <SmallButton>
                  <ManageIcon />
                  Gestisci
                </SmallButton>
              </SmallList>
            </GroupItems>
            <GroupLabel>Sistema</GroupLabel>
          </Group>
        </Ribbon>

        <AddressRow>
          <NavButtons>
            <NavButton aria-label="Indietro">
              <svg width="20" height="20" viewBox="0 0 20 20">
                <circle cx="10" cy="10" r="8.700" fill="none" stroke="#757575" strokeWidth="1.300" />
                <path d="M15 10H6M10 5.500L5.500 10l4.500 4.500" stroke="#6b6b6b" strokeWidth="2" fill="none" />
              </svg>
            </NavButton>
            <NavButton aria-label="Avanti" disabled>
              <svg width="20" height="20" viewBox="0 0 20 20">
                <circle cx="10" cy="10" r="8.700" fill="none" stroke="#cfcfcf" strokeWidth="1.300" />
                <path d="M5 10h9M10 5.500l4.500 4.500-4.500 4.500" stroke="#cfcfcf" strokeWidth="2" fill="none" />
              </svg>
            </NavButton>
            <NavButton aria-label="Percorsi recenti">
              <svg width="8" height="5" viewBox="0 0 8 5">
                <path d="M0.500 0.500h7L4 4.500z" fill="#777" />
              </svg>
            </NavButton>
            <NavButton aria-label="Su">
              <svg width="18" height="14" viewBox="0 0 18 14">
                <path d="M10 13V2.500M6 6.500l4-4 4 4" stroke="#7a7a7a" strokeWidth="2" fill="none" />
              </svg>
            </NavButton>
          </NavButtons>
          <AddressBox>
            <Crumbs aria-label="Percorso">
              <PcIcon />
              <Chevron />
              <a href="#questo-pc">Questo PC</a>
              <Chevron />
            </Crumbs>
            <BoxButton aria-label="Percorsi precedenti">
              <svg width="8" height="6" viewBox="0 0 8 6">
                <path d="M0.800 0.800L4 4.500l3.200-3.700" stroke="#666" strokeWidth="1.800" fill="none" />
              </svg>
            </BoxButton>
            <BoxButton $ruled aria-label="Aggiorna">
              <svg width="12" height="12" viewBox="0 0 12 12">
                <path d="M9 3.200A4.200 4.200 0 1 0 10.200 6.500" stroke="#777" strokeWidth="1.600" fill="none" />
                <path d="M6 0.500h4.500V5z" fill="#777" />
              </svg>
            </BoxButton>
          </AddressBox>
          <SearchBox>
            <SearchInput type="text" placeholder="Cerca in Questo PC" aria-label="Cerca in Questo PC" />
            <svg width="12" height="12" viewBox="0 0 12 12" aria-hidden="true">
              <circle cx="7.500" cy="4.500" r="3.400" fill="none" stroke="#6b6b6b" strokeWidth="1.700" />
              <path d="M5 7L1 11" stroke="#6b6b6b" strokeWidth="2.200" />
            </svg>
          </SearchBox>
        </AddressRow>

        <Body>
          <Sidebar aria-label="Riquadro di spostamento">
            {tree.map((nodes) => (
              <TreeSection key={nodes[0].label}>
                {nodes.map((node, i) => (
                  <li key={node.label}>
                    <TreeLink href="#" $level={i === 0 ? 1 : 2} $selected={node.selected}>
                      {node.icon}
                      {node.label}
                    </TreeLink>
                  </li>
                ))}
              </TreeSection>
            ))}
          </Sidebar>
          <Content>
            <SectionHead>
              <SectionMark />
              Cartelle (6)
            </SectionHead>
            <Grid>
              {folders.map((f) => (
                <Tile key={f.label} href="#">
                  <BigFolder kind={f.kind} />
                  {f.label}
                </Tile>
              ))}
            </Grid>
            <SectionHead>
              <SectionMark />
              Dispositivi e unità (2)
            </SectionHead>
            <Grid>
              {drives.map((d) => (
                <DriveTile key={d.label} href="#">
                  <BigDrive system={d.system} />
                  <DriveInfo>
                    <span>{d.label}</span>
                    <Track>
                      <Fill style={{ width: `${d.used}%` }} />
                    </Track>
                    <DriveNote>{d.note}</DriveNote>
                  </DriveInfo>
                </DriveTile>
              ))}
            </Grid>
          </Content>
        </Body>

        <StatusBar>
          <span>8 elementi</span>
          <ViewButtons>
            <QuickButton aria-label="Dettagli">
              <DetailsViewIcon />
            </QuickButton>
            <QuickButton aria-label="Icone grandi">
              <TilesViewIcon />
            </QuickButton>
          </ViewButtons>
        </StatusBar>
      </Client>
    </Frame>
  );
}
